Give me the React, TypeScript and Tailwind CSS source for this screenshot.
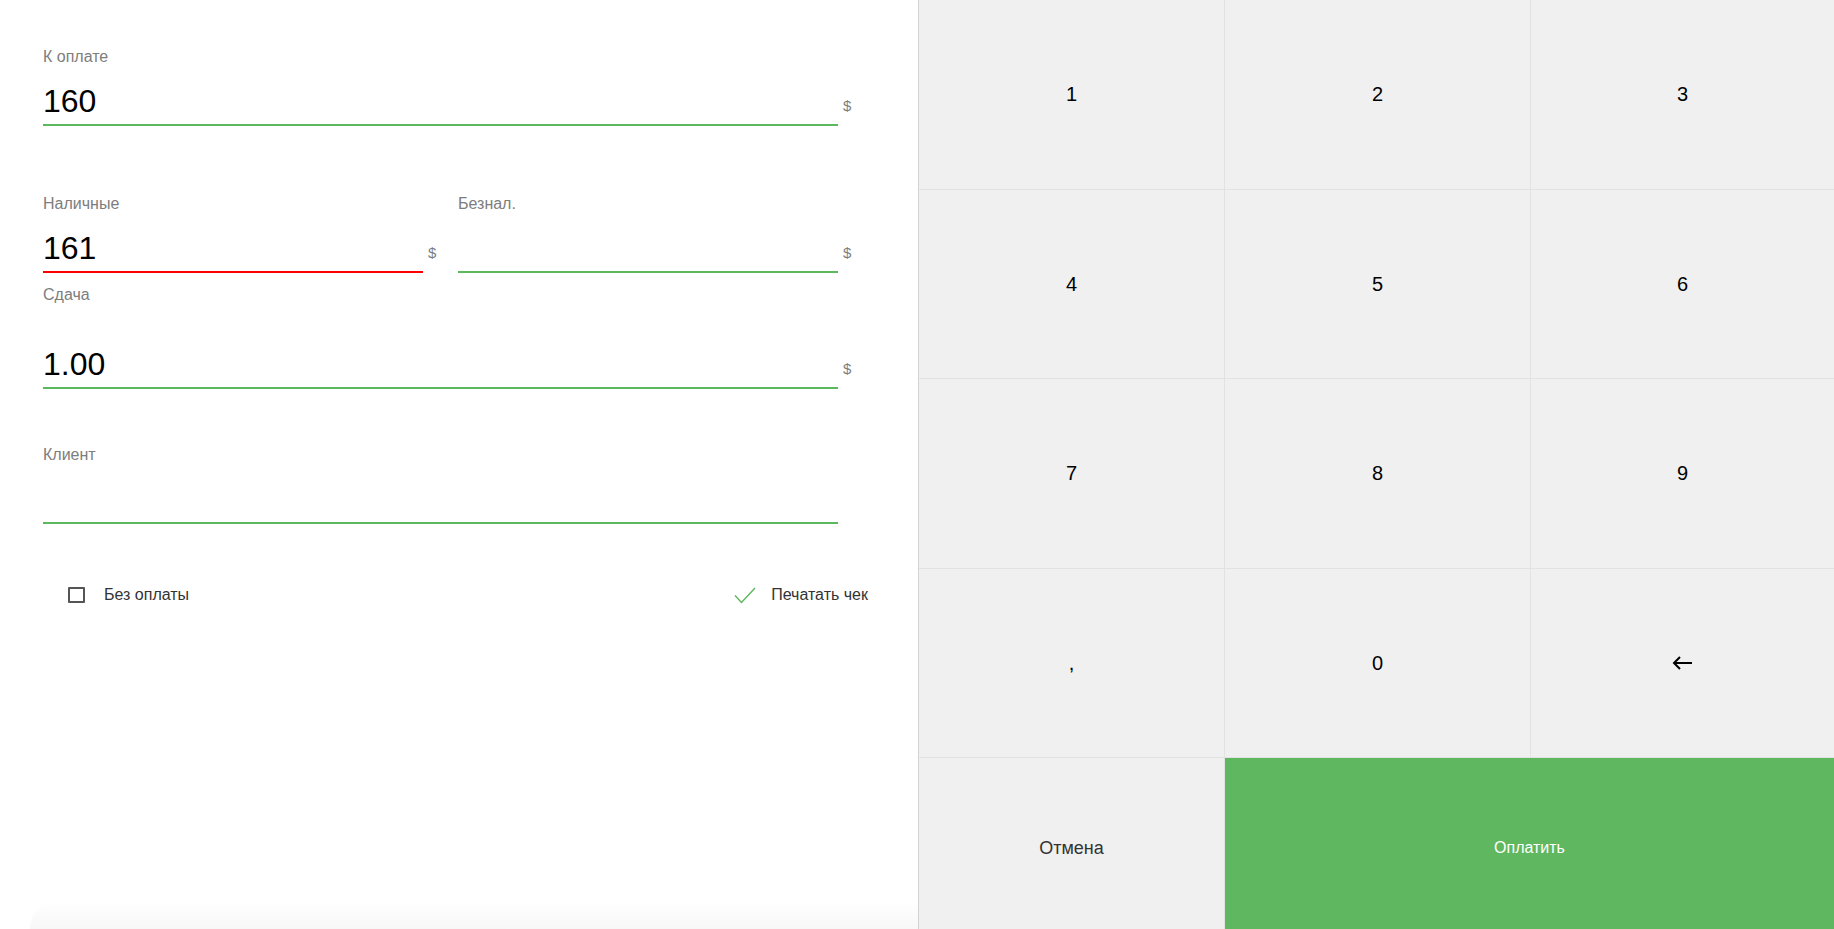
import { ReactNode } from "react";

function Field({
    label,
    value,
    line = "green",
    dollar = true,
    gap = "mt-[17px]",
}: {
    label: string;
    value?: string;
    line?: "green" | "red";
    dollar?: boolean;
    gap?: string;
}) {
    return (
        <div>
            <div className="text-[16px] leading-[18px] text-[#7d7d7d]">{label}</div>
            <div className={`flex items-end ${gap}`}>
                <div
                    className={`flex-1 h-[43px] pt-[2px] pb-[7px] border-b-2 text-[32px] leading-[32px] text-black ${
                        line === "red" ? "border-[#ff0000]" : "border-[#5cb85c]"
                    }`}
                >
                    {value}
                </div>
                <span className="w-[35px] pl-[5px] mb-[13px] text-[15px] leading-[15px] text-[#7a7d80]">
                    {dollar ? "$" : ""}
                </span>
            </div>
        </div>
    );
}

function Key({ children, last = false }: { children: ReactNode; last?: boolean }) {
    return (
        <button
            className={`flex items-center justify-center bg-[#f0f0f0] border-b border-[#e2e2e2] text-[20px] text-black ${
                last ? "" : "border-r"
            }`}
        >
            {children}
        </button>
    );
}

function BackArrow() {
    return (
        <svg width="21" height="14" viewBox="0 0 21 14" fill="none" stroke="#000" strokeWidth="2">
            <path d="M20 7H2" />
            <path d="M8 1L2 7l6 6" strokeLinejoin="miter" />
        </svg>
    );
}

export default function App() {
    const keys: ReactNode[] = ["1", "2", "3", "4", "5", "6", "7", "8", "9", ",", "0", <BackArrow key="back" />];

    return (
        <div className="flex h-[929px] w-full bg-white font-['Liberation_Sans',Arial,sans-serif] overflow-hidden">
            <div className="w-[919px] shrink-0 flex flex-col border-r border-[#d2d2d2]">
                <div className="flex-1 ml-[43px] w-[830px] pt-[48px]">
                    <Field label="К оплате" value="160" />
                    <div className="grid grid-cols-2 mt-[69px]">
                        <Field label="Наличные" value="161" line="red" />
                        <Field label="Безнал." />
                    </div>
                    <div className="mt-[13px]">
                        <Field label="Сдача" value="1.00" gap="mt-[42px]" />
                    </div>
                    <div className="mt-[57px]">
                        <Field label="Клиент" dollar={false} />
                    </div>
                    <div className="flex items-center justify-between mt-[61px] pl-[25px] pr-[5px] h-[20px] text-[16px] leading-[20px] text-[#333]">
                        <label className="flex items-center gap-[19px]">
                            <span className="w-[17px] h-[16px] border-2 border-[#555] rounded-[1px]" />
                            Без оплаты
                        </label>
                        <label className="flex items-center gap-[15px]">
                            <svg width="22" height="17" viewBox="0 0 22 17" fill="none" stroke="#5cb85c" strokeWidth="1.4">
                                <path d="M1 8.5L7.5 15.5L21 1" />
                            </svg>
                            Печатать чек
                        </label>
                    </div>
                </div>
                <div className="h-[28px] ml-[30px] rounded-tl-[60px] bg-gradient-to-b from-white to-[#f7f7f7]" />
            </div>
            <div className="flex-1 grid grid-cols-[306px_306px_1fr] grid-rows-[189.5px_189.5px_189.5px_189.5px_1fr]">
                {keys.map((k, i) => (
                    <Key key={i} last={i % 3 === 2}>
                        {k}
                    </Key>
                ))}
                <button className="bg-[#f0f0f0] border-r border-[#e2e2e2] pt-[9px] text-[18px] text-[#333] flex items-center justify-center">
                    Отмена
                </button>
                <button className="col-span-2 bg-[#5fb760] pt-[9px] text-white text-[16px] flex items-center justify-center">
                    Оплатить
                </button>
            </div>
        </div>
    );
}
